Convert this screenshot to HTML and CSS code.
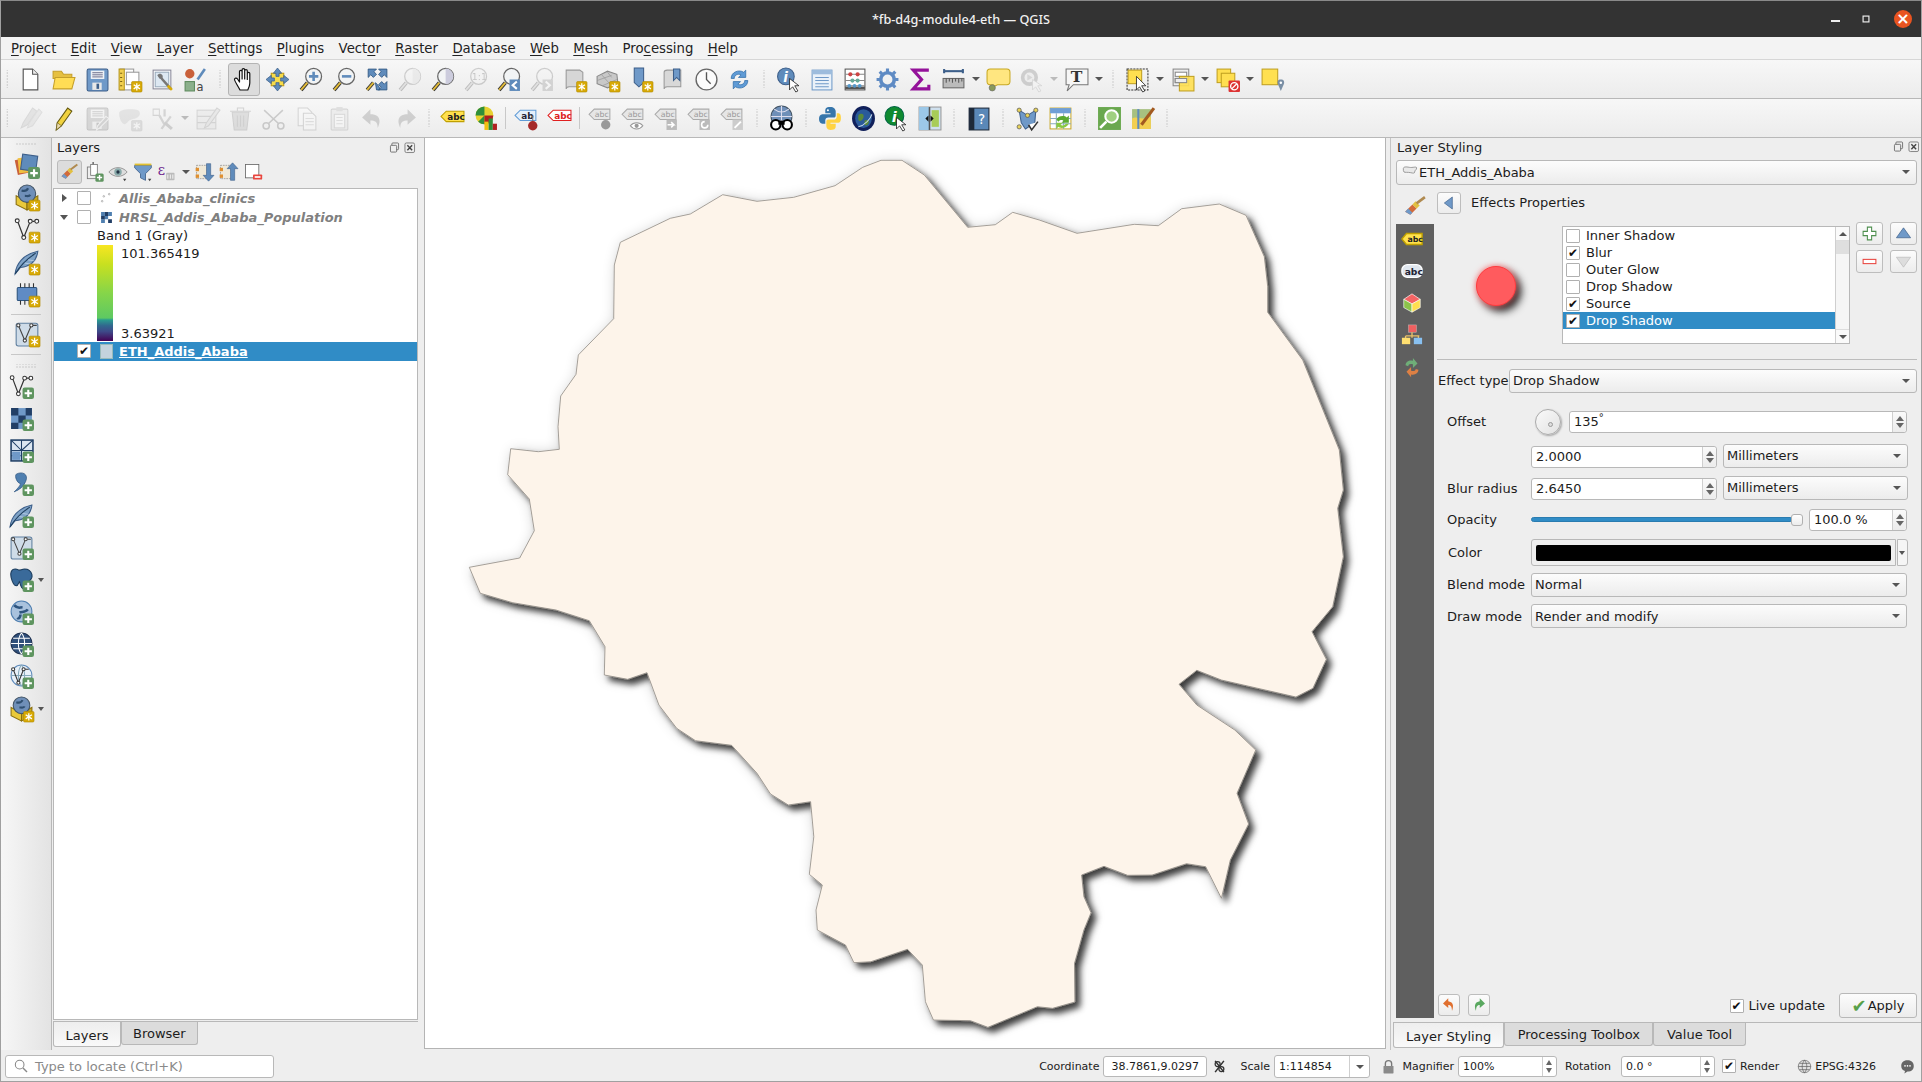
FILE: index.html
```html
<!DOCTYPE html>
<html lang="en">
<head>
<meta charset="utf-8">
<title>*fb-d4g-module4-eth — QGIS</title>
<link rel="stylesheet" href="styles.css">
</head>
<body>
<svg class="defs" width="0" height="0" aria-hidden="true">
<defs>
<g id="bs"><rect x="14" y="14" width="10" height="10" rx="1" fill="#d8aa06" stroke="#b08a00" stroke-width=".6"/><path d="M19 15.5v7M16 17l6 4M22 17l-6 4" stroke="#fff" stroke-width="1.2"/></g>
<g id="bp"><rect x="13" y="13" width="11" height="11" rx="2" fill="#5f9560"/><path d="M18.500 15v7M15 18.500h7" stroke="#fff" stroke-width="2"/></g>
<g id="new"><path d="M5 2h9l5 5v15H5z" fill="#fff" stroke="#555" stroke-width="1.100"/><path d="M14 2v5h5" fill="#eee" stroke="#555"/></g>
<g id="open"><path d="M2 7V4h8l2 3h8v4H2z" fill="#e6c040" stroke="#c59f2a"/><path d="M2 21l2-11h19l-3 11z" fill="#ffdd55" stroke="#c59f2a"/></g>
<g id="save"><rect x="3" y="2" width="20" height="21" rx="1.500" fill="#6f99c8" stroke="#3d5f8a"/><rect x="6.500" y="3.500" width="13" height="8" fill="#eef2f6"/><path d="M8 5.500h10M8 7.500h10M8 9.500h10" stroke="#557" stroke-width=".8"/><rect x="8" y="15" width="9" height="7" fill="#e8e8e8"/><rect x="12" y="16" width="2.500" height="5" fill="#3d5f8a"/></g>
<g id="layout"><rect x="3" y="2" width="13" height="20" fill="#fff" stroke="#999"/><rect x="2" y="2" width="5" height="20" fill="#f1cf50" stroke="#b6961e"/><rect x="9" y="5" width="12" height="12" fill="#fff" stroke="#999"/><path d="M3 6h2M3 10h2M3 14h2M3 18h2" stroke="#7a6210"/><use href="#bs"/></g>
<g id="props"><rect x="3" y="3" width="17" height="18" fill="#fff" stroke="#889"/><rect x="5" y="5" width="13" height="14" fill="#dde8f2" stroke="#9ab"/><path d="M9 8l3 4 8 9" stroke="#777" stroke-width="2.400" fill="none"/><path d="M17 18l4 4" stroke="#d8aa06" stroke-width="2.500"/><path d="M7 8c1-2 4-2 5 0s-1 4-3 3z" fill="#777"/></g>
<g id="style"><circle cx="6.500" cy="6.500" r="4.500" fill="#c9603a"/><path d="M14 12L21 2" stroke="#5f8bbb" stroke-width="2.500"/><rect x="2" y="14" width="9" height="9" fill="#8cb08c" stroke="#5d8a5d"/><text x="13" y="23" class="svgt" font-size="11" fill="#444">a</text></g>
<g id="hand"><path d="M8 23C6 19 3 15 2.500 12.500c0-1.500 2-2 3-.5L7.500 15V4.500c0-1.600 2.600-1.600 2.600 0V12 2.800c0-1.600 2.600-1.600 2.600 0V12 3.800c0-1.600 2.600-1.600 2.600 0V12.500 6.500c0-1.500 2.500-1.500 2.500 0V16c0 3-1 5-2 7z" fill="#fff" stroke="#111" stroke-width="1.200" stroke-linejoin="round"/></g>
<g id="pansel"><rect x="6" y="6" width="12" height="12" fill="#f7dc4a" stroke="#c09a10"/><path d="M12 1l4 5h-2.500v3h-3V6H8zM12 23l4-5h-2.500v-3h-3v3H8zM1 12l5-4v2.500h3v3H6V16zM23 12l-5-4v2.500h-3v3h3V16z" fill="#5f8bbb" stroke="#3d5f8a" stroke-width=".7"/></g>
<g id="mg"><path d="M9 15l-6 7" stroke="#333" stroke-width="3.600"/><path d="M9 15l-6 7" stroke="#e2bb3a" stroke-width="1.800"/><circle cx="15" cy="9" r="7.600" fill="#f2f4f5" stroke="#666" stroke-width="1.200"/></g>
<g id="zin"><use href="#mg"/><path d="M15 4.500v9M10.500 9h9" stroke="#5f8bbb" stroke-width="2.500"/></g>
<g id="zout"><use href="#mg"/><path d="M10.500 9h9" stroke="#5f8bbb" stroke-width="2.500"/></g>
<g id="zfull"><path d="M9 15l-6 7" stroke="#333" stroke-width="3.500"/><path d="M9 15l-6 7" stroke="#e2bb3a" stroke-width="1.800"/><path d="M4 2h8l-2.500 2.500L12 7l-3 3-2.500-2.500L4 10zM22 2v8l-2.500-2.500L17 10l-3-3 2.500-2.500L14 2zM22 22h-8l2.500-2.500L14 17l3-3 2.500 2.500L22 14zM11 15l2 2 2 3v2h-3z" fill="#5f8bbb" stroke="#2f5680" stroke-width=".8"/></g>
<g id="zsel"><use href="#mg"/><path d="M15 1.500a7.500 7.500 0 0 1 0 15z" fill="#e8d880"/></g>
<g id="zlay"><use href="#mg"/><path d="M15 1.500a7.500 7.500 0 0 1 0 15z" fill="#ccd"/></g>
<g id="z11"><use href="#mg"/><text x="8.500" y="12.500" class="svgt" font-size="9" fill="#555">1:1</text></g>
<g id="zlast"><use href="#mg"/><rect x="13" y="12" width="10" height="11" fill="#5f8bbb"/><path d="M20 14l-4 3.500 4 3.500" stroke="#fff" stroke-width="2" fill="none"/></g>
<g id="znext"><use href="#mg"/><rect x="13" y="12" width="10" height="11" fill="#888"/><path d="M16 14l4 3.500-4 3.500" stroke="#fff" stroke-width="2" fill="none"/></g>
<g id="mapv"><path d="M4 3h13l3 2v14H7c-2 0-3 1-3 2z" fill="#d6d6d6" stroke="#999"/><use href="#bs"/></g>
<g id="view3"><path d="M2 9l10-5 9 3 1 9-10 4-10-4z" fill="#c8c8c8" stroke="#888"/><path d="M6 7l8 9M12 5l4 5M2 13l14-5M7 18l14-6" stroke="#999" stroke-width=".7"/><use href="#bs"/></g>
<g id="bmk"><path d="M6 1h9v14l-4.500 4L6 15z" fill="#6f99c8" stroke="#3d5f8a"/><use href="#bs"/></g>
<g id="bmks"><path d="M3 5c0-2 2-2 3-2h13v16H6c-2 0-3 1-3 2z" fill="#d8d8d8" stroke="#999"/><path d="M12 2h6v11l-3-3-3 3z" fill="#6f99c8" stroke="#3d5f8a"/></g>
<g id="clock"><circle cx="12" cy="12" r="10" fill="#fbfbfb" stroke="#666" stroke-width="1.300"/><path d="M12 5v7l4 4" stroke="#555" stroke-width="1.300" fill="none"/></g>
<g id="refresh"><path d="M4 11c0-6 7-9 12-6l2-2v7h-7l2.500-2.500C10 6 7 8 7 11z" fill="#5f9bd6" stroke="#2f6ba6" stroke-width=".7"/><path d="M20 13c0 6-7 9-12 6l-2 2v-7h7l-2.500 2.500C14 18 17 16 17 13z" fill="#5f9bd6" stroke="#2f6ba6" stroke-width=".7"/></g>
<g id="identify"><circle cx="9.500" cy="9" r="8" fill="#5f8bbb" stroke="#3d5f8a"/><text x="7" y="14" class="svgt b i" font-size="13" fill="#fff">i</text><path d="M13 11v11l3-3 3 5 2-1-3-5h4z" fill="#fff" stroke="#222" stroke-width=".8"/></g>
<g id="table"><rect x="3" y="3" width="19" height="19" fill="#e9f1f9" stroke="#6f99c8"/><rect x="3" y="3" width="19" height="4" fill="#9dbcdd"/><path d="M6 10h13M6 13h13M6 16h13M6 19h13" stroke="#6f99c8"/></g>
<g id="abacus"><rect x="3" y="2" width="19" height="20" fill="#fff" stroke="#555"/><path d="M3 20h19" stroke="#555" stroke-width="2.500"/><path d="M3 7h19M3 13h19M3 18h19" stroke="#888"/><circle cx="8" cy="7" r="2" fill="#c44"/><circle cx="15" cy="7" r="2" fill="#c44"/><circle cx="10" cy="13" r="2" fill="#6a9"/><circle cx="15" cy="13" r="2" fill="#6a9"/><circle cx="7" cy="18" r="1.800" fill="#59c"/><circle cx="12" cy="18" r="1.800" fill="#59c"/><circle cx="17" cy="18" r="1.800" fill="#59c"/></g>
<g id="gear"><circle cx="12" cy="12" r="6.500" fill="none" stroke="#5f8bc4" stroke-width="3.500"/><path d="M12 1.500v5M12 17.500v5M1.500 12h5M17.500 12h5M4.500 4.500l3.500 3.500M16 16l3.500 3.500M19.500 4.500L16 8M8 16l-3.500 3.500" stroke="#5f8bc4" stroke-width="3"/></g>
<g id="sigma"><path d="M20 3H5l8 9-8 9h15v-4" fill="none" stroke="#94129a" stroke-width="3"/></g>
<g id="measure"><path d="M3 4h18" stroke="#3d5f8a" stroke-width="2"/><path d="M3 2v4M21 2v4" stroke="#3d5f8a" stroke-width="2"/><rect x="2" y="11" width="20" height="9" fill="#bbb" stroke="#666"/><path d="M5 11v4M8 11v3M11 11v4M14 11v3M17 11v4M20 11v3" stroke="#555"/></g>
<g id="tip"><path d="M4 2h16c2 0 3 1 3 3v9c0 2-1 3-3 3H11l-4 2V17H4c-2 0-3-1-3-3V5c0-2 1-3 3-3z" fill="#ffe680" stroke="#c8a820"/><circle cx="6" cy="20" r="3" fill="#8a9a5a" stroke="#666" stroke-width=".6"/></g>
<g id="action"><circle cx="10" cy="10" r="6.500" fill="#e9e9e9" stroke="#aaa" stroke-width="3.500"/><path d="M8 7l5 3-5 3z" fill="#bbb"/><path d="M13 12v10l3-3 3 5 2-1-3-5h4z" fill="#f4f4f4" stroke="#bbb" stroke-width=".8"/></g>
<g id="ttext"><path d="M2 2h21v15H9l-6 6 2-6H2z" fill="#f6f6f6" stroke="#777"/><text x="6.500" y="14.500" class="svgs" font-size="15" font-weight="700" fill="#333">T</text></g>
<g id="select"><rect x="2" y="2" width="20" height="20" fill="none" stroke="#333" stroke-dasharray="2 1"/><rect x="3" y="3" width="13" height="13" fill="#ffdf50" stroke="#c0a020"/><path d="M11 9v13l3-3 3 5 2-1-3-5h4z" fill="#fff" stroke="#222" stroke-width=".8"/></g>
<g id="selform"><rect x="3" y="2" width="15" height="16" fill="#eee" stroke="#888"/><rect x="5" y="5" width="11" height="4" fill="#fff" stroke="#888"/><rect x="5" y="11" width="11" height="4" fill="#fff" stroke="#888"/><rect x="9" y="9" width="14" height="14" fill="#ffdf50" stroke="#c0a020" fill-opacity=".9"/><rect x="5" y="11" width="11" height="4" fill="#eee" stroke="#888"/></g>
<g id="desel"><rect x="2" y="2" width="13" height="13" fill="#ffdf50" stroke="#c0a020"/><rect x="6" y="6" width="13" height="13" fill="#ffdf50" stroke="#c0a020"/><rect x="13" y="13" width="11" height="11" rx="1" fill="#d33"/><circle cx="18.500" cy="18.500" r="3.500" fill="none" stroke="#fff" stroke-width="1.300"/><path d="M16 21l5-5" stroke="#fff" stroke-width="1.300"/></g>
<g id="selpin"><rect x="2" y="2" width="15" height="15" fill="#ffe050" stroke="#c0a020"/><path d="M20 12c-3 0-3.500 2-3 4l3 7 3-7c.5-2 0-4-3-4z" fill="#7a8fa5"/><circle cx="20" cy="15" r="1.200" fill="#fff"/></g>
<g id="pencils"><path d="M3 21l2-5L14 2l4 3-9 13z" fill="#bbb" stroke="#999"/><path d="M9 21l2-5 9-13 3 3-9 13z" fill="#ccc" stroke="#aaa"/></g>
<g id="pencil"><path d="M5 23l1-7L16 2l4 3-10 14z" fill="#f1d23f" stroke="#665a10"/><path d="M5 23l1-7 4 3z" fill="#e9d9b0" stroke="#665a10" stroke-width=".6"/></g>
<g id="savee"><use href="#save"/><path d="M12 23l1-4 8-9 3 2-9 9z" fill="#888" stroke="#eee"/></g>
<g id="addpoly"><path d="M2 7c0-3 5-4 10-4s10 0 10 4-4 5-8 6-5 6-8 4-4-7-4-10z" fill="#bbb"/><use href="#bs"/></g>
<g id="tools"><path d="M3 3h6v6H3z" fill="none" stroke="#888"/><path d="M9 9l5 9M14 3v7M20 10l-9 12" stroke="#888" stroke-width="2.200"/><path d="M14 16l7 6" stroke="#777" stroke-width="3"/></g>
<g id="edittab"><rect x="2" y="4" width="18" height="18" fill="#ddd" stroke="#888"/><path d="M2 10h18M2 16h18" stroke="#888" stroke-width="1.300"/><path d="M9 21l2-5 10-14 3 2-11 15z" fill="#ccc" stroke="#888"/></g>
<g id="trash"><path d="M4 6h16l-2 17H6z" fill="#b8a8a0" stroke="#8a7a70"/><path d="M2 5h20M9 2h6v3H9zM9 9v11M12 9v11M15 9v11" stroke="#8a7a70" fill="none"/></g>
<g id="scissors"><circle cx="5" cy="19" r="3" fill="none" stroke="#666" stroke-width="1.500"/><circle cx="19" cy="19" r="3" fill="none" stroke="#666" stroke-width="1.500"/><path d="M7 17L21 4M17 17L3 4" stroke="#666" stroke-width="1.500"/></g>
<g id="copy"><path d="M4 2h9l4 4v13H4z" fill="#fff" stroke="#888"/><path d="M9 7h9l3 3v13H9z" fill="#fff" stroke="#888"/><path d="M11 12h8M11 15h8M11 18h8" stroke="#aaa"/></g>
<g id="paste"><rect x="4" y="3" width="16" height="20" rx="1" fill="#ddd" stroke="#888"/><rect x="9" y="1" width="6" height="4" fill="#aaa"/><rect x="7" y="8" width="10" height="13" fill="#fff" stroke="#999"/><path d="M9 11h6M9 14h6M9 17h6" stroke="#aaa"/></g>
<g id="undo"><path d="M10 3L2 11l8 7v-4c4 0 7 1 7 7 4-8 1-13-7-13z" fill="#777"/></g>
<g id="redo"><path d="M14 3l8 8-8 7v-4c-4 0-7 1-7 7-4-8-1-13 7-13z" fill="#777"/></g>
<g id="lab"><path d="M1 10l5-5h17v10H6z" fill="#ffe14d" stroke="#c0a000"/><text x="7" y="13.500" class="svgt b" font-size="8.500" fill="#222">abc</text></g>
<g id="pie"><circle cx="11" cy="9" r="8.500" fill="#e7d130"/><path d="M11 9V.5A8.500 8.500 0 0 0 2.500 9z" fill="#2f8f3a"/><path d="M11 9L5 15a8.500 8.500 0 0 0 6 2.500z" fill="#2f8f3a"/><path d="M11 9h8.500a8.500 8.500 0 0 1-8.500 8.500z" fill="#b02020"/><rect x="11" y="15" width="4" height="8" fill="#f0c010"/><rect x="15" y="12" width="4" height="11" fill="#2f8f3a"/><rect x="19" y="17" width="4" height="6" fill="#b02020"/></g>
<g id="labpin"><path d="M1 9l5-5h15v10H6z" fill="#e4effa" stroke="#5f9bd6"/><text x="7" y="12.500" class="svgt b" font-size="8.500" fill="#223">ab</text><path d="M18 9v7" stroke="#777"/><circle cx="18" cy="19" r="4.500" fill="#a52a2a"/></g>
<g id="labred"><path d="M1 9l5-5h17v10H6z" fill="#fff" stroke="#e02020"/><text x="7" y="12.500" class="svgt b" font-size="8.500" fill="#d22">abc</text></g>
<g id="labg"><path d="M1 8l5-5h15v10H6z" fill="#e6e6e6" stroke="#aaa"/><text x="6.500" y="11" class="svgt" font-size="7.500" fill="#999">abc</text></g>
<g id="labg1"><use href="#labg"/><circle cx="17" cy="18" r="4.500" fill="#999"/></g>
<g id="labg2"><use href="#labg"/><path d="M9 19c3-4 9-4 12 0-3 4-9 4-12 0z" fill="#fff" stroke="#999"/><circle cx="15" cy="19" r="2" fill="#999"/></g>
<g id="labg3"><use href="#labg"/><rect x="12" y="13" width="10" height="10" fill="#bbb"/><path d="M13 18h6l-2.500-2.500M19 18l-2.500 2.500" stroke="#fff" stroke-width="1.500" fill="none"/></g>
<g id="labg4"><use href="#labg"/><rect x="12" y="13" width="10" height="10" fill="#bbb"/><path d="M20 18a3 3 0 1 1-3-3" stroke="#fff" stroke-width="1.500" fill="none"/></g>
<g id="labg5"><use href="#labg"/><rect x="12" y="13" width="10" height="10" fill="#ccc"/><path d="M14 21l6-6" stroke="#fff" stroke-width="2"/></g>
<g id="webglobe"><circle cx="12" cy="10" r="10" fill="#6f8fb8" stroke="#456"/><path d="M2 10h20M12 0v20M5 3c5 4 9 4 14 0M5 17c5-4 9-4 14 0" stroke="#dde" fill="none"/><circle cx="6.500" cy="18" r="4.500" fill="#fff" stroke="#000" stroke-width="2"/><circle cx="17.500" cy="18" r="4.500" fill="#fff" stroke="#000" stroke-width="2"/><path d="M9 14h6v4H9z" fill="#000"/></g>
<g id="python"><path d="M12 1C7 1 7 3 7 5v2h5v1H5c-2 0-4 1-4 4.500S3 17 5 17h2v-3c0-2 1-3 3-3h5c1.500 0 2-1 2-2V5c0-2-2-4-5-4z" fill="#3776ab"/><path d="M12 23c5 0 5-2 5-4v-2h-5v-1h7c2 0 3-1 3-4.500S21 7 19 7h-1v3c0 2-1 3-3 3H10c-1.500 0-2 1-2 2v4c0 2 1 4 4 4z" fill="#ffd343"/><circle cx="9.500" cy="4" r="1" fill="#fff"/></g>
<g id="earth"><ellipse cx="12" cy="12" rx="11" ry="12" fill="#10205a"/><ellipse cx="12" cy="12" rx="8" ry="9" fill="#2a5a9a"/><path d="M7 9c3-3 6-1 5 2s-4 5-5 2zM13 14c2-1 5-1 4 2s-3 3-4 2z" fill="#5a8a3a"/><path d="M7 20c6-1 12-8 13-12" stroke="#cde" fill="none"/></g>
<g id="infog"><circle cx="10" cy="9.500" r="9" fill="#108a30" stroke="#064"/><text x="7.500" y="15" class="svgt b i" font-size="14" fill="#fff">i</text><path d="M12 11v11l3-3 3 5 2-1-3-5h4z" fill="#fff" stroke="#222" stroke-width=".8"/></g>
<g id="swipe"><rect x="2" y="1" width="21" height="22" fill="#cfe0ee" stroke="#999"/><rect x="2" y="1" width="10" height="22" fill="#9cc8e8"/><rect x="14" y="4" width="7" height="16" fill="#a8cc58"/><path d="M12 1v22" stroke="#555" stroke-width="1.500"/><path d="M8 12l3-3v6zM16 12l-3-3v6z" fill="#111"/></g>
<g id="help"><rect x="3" y="2" width="19" height="21" fill="#5a88b8" stroke="#1e2a3a"/><rect x="3" y="2" width="5" height="21" fill="#1e2a3a"/><text x="11.500" y="17" class="svgt" font-size="13" fill="#fff">?</text></g>
<g id="nodes"><path d="M4 4l8 5 8-5-1 12-9 6-4-6z" fill="#6f99c8" stroke="#3d5f8a"/><g fill="#e8d35a" stroke="#555" stroke-width=".7"><circle cx="4" cy="4" r="2"/><circle cx="20" cy="4" r="2"/><circle cx="4" cy="20" r="2"/><circle cx="12" cy="9" r="2"/></g><path d="M13 18l3 5 6-8" stroke="#333" stroke-width="1.500" fill="#fff"/></g>
<g id="tabref"><rect x="2" y="2" width="20" height="20" fill="#fff" stroke="#c9a82a"/><rect x="2" y="2" width="20" height="5" fill="#6f9fd6"/><path d="M2 12h20M2 17h20M8 7v15M15 7v15" stroke="#8ab"/><path d="M8 13c2-4 8-4 10-2l2-2v7h-7l2-2c-1-1-4-1-5 1z" fill="#5aaa30"/><path d="M20 17c-2 4-8 5-10 3l-2 2v-6h6l-2 2c1 1 4 1 5-1z" fill="#8ac840"/></g>
<g id="greenmg"><rect x="1" y="1" width="22" height="22" fill="#6aa84f"/><circle cx="14" cy="10" r="6" fill="#a0d080" stroke="#fff" stroke-width="2"/><path d="M9 15l-6 6" stroke="#fff" stroke-width="2.500"/></g>
<g id="mapbrush"><rect x="2" y="3" width="18" height="19" fill="#a7c080"/><path d="M2 12c5-3 9 3 18-2v12H2z" fill="#f3cf50"/><path d="M8 3v19" stroke="#5f8bbb" stroke-width="2"/><path d="M11 18L23 2" stroke="#a35a20" stroke-width="3"/></g>
<g id="brushb"><path d="M3 17l7-7 4 4-6 6z" fill="#d26a3a"/><path d="M3 17l3-3 4 4-2 2z" fill="#6f99c8"/><path d="M10 10l4 4 3-3-4-4z" fill="#e2c040"/><path d="M14 9l8-6" stroke="#b08a50" stroke-width="2.500"/></g>
<g id="duplayer"><rect x="4" y="6" width="11" height="14" fill="#eee" stroke="#777"/><rect x="8" y="3" width="8" height="13" fill="#fff" stroke="#777"/><path d="M11 3V0" stroke="#777" stroke-width="2"/><use href="#bp" transform="translate(2 2) scale(.9)"/></g>
<g id="eye"><path d="M1 12c6-7 16-7 22 0-6 7-16 7-22 0z" fill="#ddd" stroke="#888"/><circle cx="12" cy="12" r="4.500" fill="#8aa"/><circle cx="12" cy="12" r="2" fill="#234"/><path d="M18 20l4 0-2 3z" fill="#444"/></g>
<g id="filter"><path d="M2 4h20v3l-7 7v8l-6-3v-5L2 7z" fill="#6f99c8" stroke="#3d5f8a"/><path d="M2 3h20" stroke="#e2c030" stroke-width="2.200"/><path d="M18 20l4 0-2 3z" fill="#444"/></g>
<g id="eps"><text x="1" y="15" class="svgs" font-size="17" fill="#6a1a8a">ε</text><rect x="11" y="13" width="10" height="9" rx="1" fill="#bbb"/><path d="M13 15v5M16 15v5M19 15v5" stroke="#fff"/></g>
<g id="expand"><rect x="3" y="4" width="13" height="16" fill="#f0e9d8" stroke="#999" stroke-dasharray="2 1"/><rect x="2" y="7" width="4" height="4" fill="#e09030"/><rect x="2" y="15" width="4" height="4" fill="#e09030"/><path d="M15 2v14h-4l6.500 7 6.500-7h-4V2z" fill="#5f8bbb" stroke="#3d5f8a" stroke-width=".7"/></g>
<g id="collapse"><rect x="3" y="4" width="13" height="16" fill="#f0e9d8" stroke="#999" stroke-dasharray="2 1"/><rect x="2" y="7" width="4" height="4" fill="#e09030"/><rect x="2" y="15" width="4" height="4" fill="#e09030"/><path d="M15 22V8h-4l6.500-7L24 8h-4v14z" fill="#5f8bbb" stroke="#3d5f8a" stroke-width=".7"/></g>
<g id="rmlayer"><rect x="3" y="3" width="16" height="16" fill="#fff" stroke="#666"/><rect x="12" y="15" width="11" height="6" rx="1" fill="#e8463f"/><path d="M14 18h7" stroke="#fff" stroke-width="2"/></g>
<g id="dsm"><rect x="2" y="5" width="14" height="14" transform="rotate(-12 9 12)" fill="#c9603a"/><rect x="4" y="4" width="14" height="14" transform="rotate(-6 11 11)" fill="#f0c040"/><rect x="7" y="2" width="14" height="14" transform="rotate(8 14 9)" fill="#5f8bbb" stroke="#3d5f8a"/><use href="#bp"/></g>
<g id="gpkgn"><path d="M2 10l10 5v8l-10-5z" fill="#e9c93a" stroke="#8a7010"/><path d="M12 15l10-5v8l-10 5z" fill="#c9a820" stroke="#8a7010"/><circle cx="12" cy="8" r="8" fill="#6f8fb8" stroke="#456"/><path d="M7 5c3 1 5 0 6-2M10 10c2 0 4 1 5-1" stroke="#2f4f70" stroke-width="2" fill="none"/><use href="#bs"/></g>
<g id="vline"><path d="M3 3l6 16L15 4h6" fill="none" stroke="#333" stroke-width="1.100"/><g fill="#fff" stroke="#333"><circle cx="3" cy="3.500" r="1.800"/><circle cx="9" cy="19" r="1.800"/><circle cx="15" cy="4" r="1.800"/><circle cx="21" cy="4" r="1.800"/></g></g>
<g id="feather"><path d="M1 23C2 14 8 5 22 2c-1 8-6 14-16 15z" fill="#7fa3c7" stroke="#3d5f8a"/><path d="M1 23C6 15 12 9 20 4" stroke="#1f3f5f" fill="none"/><path d="M10 13l6 1M13 10l6 1" stroke="#cde" stroke-width=".6"/></g>
<g id="chip"><rect x="3" y="6" width="18" height="12" rx="1" fill="#5f8bc4" stroke="#2f5680"/><path d="M6 2v4M10 2v4M14 2v4M18 2v4M6 18v4M10 18v4M14 18v4" stroke="#333"/></g>
<g id="vbox"><rect x="2" y="2" width="20" height="21" rx="2" fill="#cfdce8" stroke="#5f7f9f"/><path d="M4 4l6 14 6-14h5" fill="none" stroke="#444"/><circle cx="4" cy="4" r="1.500" fill="#fff" stroke="#444"/><circle cx="10" cy="18" r="1.500" fill="#fff" stroke="#444"/><circle cx="16" cy="4" r="1.500" fill="#fff" stroke="#444"/></g>
<g id="rast"><rect x="2" y="2" width="20" height="20" fill="#6f99c8"/><path d="M2 2h7v7H2zM9 9h7v7H9zM16 2h6v7h-6zM2 16h7v6H2zM16 16h6v6h-6z" fill="#223f66"/></g>
<g id="mesh"><rect x="2" y="2" width="21" height="20" fill="#dbe6f1" stroke="#1f3f66" stroke-width="1.500"/><path d="M2 12h21M12 2v20M2 2l10 10M12 12L23 2M2 17h10" stroke="#1f3f66"/><rect x="3" y="13" width="8" height="8" fill="#6f99c8"/></g>
<g id="comma"><path d="M7 3c6-3 12 0 9 7-2 5-6 8-11 10 3-3 6-6 6-8-3 0-6-7-4-9z" fill="#4f7fb0" stroke="#2f5680" stroke-width=".7"/></g>
<g id="pg"><path d="M6 2c-4 0-5 4-4 8s3 8 5 8 2-3 3-4c1 2 1 6 4 7s4-3 4-7c2 0 5-4 4-7s-3-5-7-5c-3 0-3 1-5 1S9 2 6 2z" fill="#3a6a9a" stroke="#1c3c5c"/></g>
<g id="webmap"><circle cx="12" cy="11" r="10" fill="#a9c2dd" stroke="#4f7fb0"/><path d="M5 5c4 4 5 2 8 2M10 12c3-1 6 0 8-3M8 17c2 2 3-2 3-3" stroke="#2f5680" stroke-width="2.500" fill="none"/></g>
<g id="wms"><circle cx="12" cy="11" r="10" fill="#2f4f7a" stroke="#1c2f4f"/><path d="M2 11h20M4 6h16M4 16h16M12 1c-4 5-4 15 0 20M12 1c4 5 4 15 0 20" stroke="#fff" fill="none"/></g>
<g id="wfs"><circle cx="12" cy="11" r="10" fill="#e9f1f9" stroke="#5f8bbb"/><path d="M2 11h20M12 1c-4 5-4 15 0 20M12 1c4 5 4 15 0 20" stroke="#8ab" fill="none"/><path d="M4 5l5 13 5-13h5" fill="none" stroke="#333"/><circle cx="4" cy="5" r="1.500" fill="#fff" stroke="#333"/><circle cx="9" cy="18" r="1.500" fill="#fff" stroke="#333"/><circle cx="14" cy="5" r="1.500" fill="#fff" stroke="#333"/></g>
<g id="gpkg"><path d="M2 10l10 5v8L2 18z" fill="#e9c93a" stroke="#8a7010"/><path d="M12 15l10-5v8l-10 5z" fill="#c9a820" stroke="#8a7010"/><circle cx="12" cy="8" r="8" fill="#6f8fb8" stroke="#456"/><path d="M7 5c3 1 5 0 6-2M10 10c2 0 4 1 5-1" stroke="#2f4f70" stroke-width="2" fill="none"/></g>
<g id="labw"><path d="M1 12l5-6h17v12H6z" fill="#ffe14d" stroke="#c0a000" stroke-width="1.500"/><text x="7" y="15.500" class="svgt b" font-size="8.500" fill="#222">abc</text></g>
<g id="labc"><rect x="1" y="5" width="22" height="14" rx="6" fill="#dfe6ee" stroke="#fff" stroke-width="1.500"/><text x="4" y="16" class="svgt b" font-size="10" fill="#223">abc</text></g>
<g id="cube"><path d="M12 2l9 6-9 5-9-5z" fill="#f46464" stroke="#fff" stroke-width=".7"/><path d="M3 8l9 5v9l-9-5z" fill="#8bc34a" stroke="#fff" stroke-width=".7"/><path d="M21 8l-9 5v9l9-5z" fill="#ffdf50" stroke="#fff" stroke-width=".7"/></g>
<g id="tree"><rect x="8" y="1" width="9" height="8" fill="#ef6060" stroke="#bbb" stroke-width=".5"/><path d="M12 9v6M5 13h15M5 13v3M19 13v3" stroke="#e8c068" stroke-width="1.500" fill="none"/><rect x="1" y="15" width="9" height="7" fill="#ffdf70"/><rect x="14" y="15" width="9" height="7" fill="#88c0f0"/></g>
<g id="history"><path d="M5 9c0-4 4-6 8-5V1l5 6-5 5V8c-3-1-5 0-5 2z" fill="#6fae78"/><path d="M19 14c0 4-4 6-8 5v3l-5-6 5-5v4c3 1 5 0 5-2z" fill="#dd8044"/></g>
<g id="undoo"><path d="M11 3L4 10l7 6v-4c3 0 5 2 5 8 3-8 1-12-5-13z" fill="#e07030"/></g>
<g id="redog"><path d="M13 3l7 7-7 6v-4c-3 0-5 2-5 8-3-8-1-12 5-13z" fill="#5aa860"/></g>
<g id="plusg"><path d="M9 3h6v6h6v6h-6v6H9v-6H3V9h6z" fill="#fff" stroke="#4f8f4f" stroke-width="1.500"/></g>
<g id="minusr"><rect x="3" y="9" width="18" height="6" fill="#fff" stroke="#e8463f" stroke-width="1.500"/></g>
<g id="upb"><path d="M12 4l10 14H2z" fill="#6f99c8" stroke="#3d5f8a"/></g>
<g id="dng"><path d="M12 20L2 6h20z" fill="#ddd" stroke="#bbb"/></g>
<g id="backb"><path d="M17 3v18L5 12z" fill="#6f99c8" stroke="#3d5f8a"/></g>
<g id="points"><circle cx="4" cy="17" r="1.500" fill="#fff" stroke="#666" stroke-width=".8"/><circle cx="7" cy="8" r="1.500" fill="#fff" stroke="#666" stroke-width=".8"/><circle cx="17" cy="4" r="1.500" fill="#fff" stroke="#666" stroke-width=".8"/></g>
<g id="rastsm"><rect x="2" y="2" width="20" height="20" fill="#fff"/><path d="M2 2h7v7H2zM15 2h7v7h-7zM9 9h6v6H9zM2 15h7v7H2z" fill="#4f7fb0"/><path d="M9 2h6v7H9zM2 9h7v6H2zM15 15h7v7h-7z" fill="#223f66"/></g>
<g id="polysm"><path d="M2 7c0-3 4-3 9-2s11-2 11 1-3 3-3 6c0 2-2 2-6 1s-9 0-10-1-1-3-1-5z" fill="#e9e9e9" stroke="#888" stroke-width="1.200"/></g>
<g id="float"><rect x="6" y="2" width="14" height="14" rx="2" fill="none" stroke="#555" stroke-width="1.600"/><rect x="3" y="7" width="13" height="14" rx="2" fill="#eee" stroke="#555" stroke-width="1.600"/></g>
<g id="closep"><rect x="2" y="2" width="20" height="20" rx="3" fill="none" stroke="#666" stroke-width="1.600"/><path d="M7 7l10 10M17 7L7 17" stroke="#444" stroke-width="3"/></g>
<g id="search"><circle cx="10" cy="10" r="6.500" fill="none" stroke="#888" stroke-width="1.600"/><path d="M15 15l6 6" stroke="#888" stroke-width="2"/></g>
<g id="crosshair"><path d="M5 3l14 18M19 3L5 21" stroke="#333" stroke-width="2.500"/><circle cx="9" cy="8" r="4" fill="none" stroke="#333" stroke-width="2"/><circle cx="15" cy="16" r="4" fill="none" stroke="#333" stroke-width="2"/></g>
<g id="lock"><path d="M7 11V7c0-6 10-6 10 0v4" fill="none" stroke="#777" stroke-width="2.200"/><rect x="4" y="11" width="16" height="12" rx="1" fill="#8a8a8a"/></g>
<g id="globes"><circle cx="12" cy="12" r="10" fill="#e0e0e0" stroke="#555"/><path d="M2 12h20M4 7h16M4 17h16M12 2c-5 6-5 14 0 20M12 2c5 6 5 14 0 20" stroke="#555" fill="none"/></g>
<g id="msg"><path d="M12 2c7 0 10 4 10 9s-3 9-10 9l-5 3 1-4c-4-1-6-4-6-8 0-5 3-9 10-9z" fill="#666"/><circle cx="8" cy="11" r="1.300" fill="#fff"/><circle cx="12" cy="11" r="1.300" fill="#fff"/><circle cx="16" cy="11" r="1.300" fill="#fff"/></g>
<g id="wrestore"><rect x="7" y="7" width="10" height="10" fill="none" stroke="#eee" stroke-width="2"/></g>
<filter id="dropshadow" x="-5%" y="-5%" width="112%" height="112%">
<feGaussianBlur in="SourceAlpha" stdDeviation="3.400" result="b"/>
<feOffset in="b" dx="5" dy="5" result="o"/>
<feComponentTransfer in="o" result="o2"><feFuncA type="linear" slope=".72"/></feComponentTransfer>
<feGaussianBlur in="SourceAlpha" stdDeviation="7" result="b2"/>
<feOffset in="b2" dx="2" dy="2" result="o3"/>
<feComponentTransfer in="o3" result="o4"><feFuncA type="linear" slope=".2"/></feComponentTransfer>
<feMerge><feMergeNode in="o4"/><feMergeNode in="o2"/><feMergeNode in="SourceGraphic"/></feMerge>
</filter>
</defs>
</svg>

<div class="win">
<header class="titlebar">
<span></span>
<span class="wintitle">*fb-d4g-module4-eth — QGIS</span>
<div class="winctl">
<span class="wmin"></span>
<svg class="wicon" viewBox="0 0 24 24"><use href="#wrestore"/></svg>
<span class="wclose">×</span>
</div>
</header>

<nav class="menubar">
<span><u>P</u>roject</span><span><u>E</u>dit</span><span><u>V</u>iew</span><span><u>L</u>ayer</span><span><u>S</u>ettings</span><span><u>P</u>lugins</span><span>Vect<u>o</u>r</span><span><u>R</u>aster</span><span><u>D</u>atabase</span><span><u>W</u>eb</span><span><u>M</u>esh</span><span>Pro<u>c</u>essing</span><span><u>H</u>elp</span>
</nav>

<div class="toolbar">
<i class="handle"></i>
<b class="tb"><svg viewBox="0 0 24 24"><use href="#new"/></svg></b>
<b class="tb"><svg viewBox="0 0 24 24"><use href="#open"/></svg></b>
<b class="tb"><svg viewBox="0 0 24 24"><use href="#save"/></svg></b>
<b class="tb"><svg viewBox="0 0 24 24"><use href="#layout"/></svg></b>
<b class="tb"><svg viewBox="0 0 24 24"><use href="#props"/></svg></b>
<b class="tb"><svg viewBox="0 0 24 24"><use href="#style"/></svg></b>
<i class="handle"></i>
<b class="tb on"><svg viewBox="0 0 24 24"><use href="#hand"/></svg></b>
<b class="tb"><svg viewBox="0 0 24 24"><use href="#pansel"/></svg></b>
<b class="tb"><svg viewBox="0 0 24 24"><use href="#zin"/></svg></b>
<b class="tb"><svg viewBox="0 0 24 24"><use href="#zout"/></svg></b>
<b class="tb"><svg viewBox="0 0 24 24"><use href="#zfull"/></svg></b>
<b class="tb dis"><svg viewBox="0 0 24 24"><use href="#zsel"/></svg></b>
<b class="tb"><svg viewBox="0 0 24 24"><use href="#zlay"/></svg></b>
<b class="tb dis"><svg viewBox="0 0 24 24"><use href="#z11"/></svg></b>
<b class="tb"><svg viewBox="0 0 24 24"><use href="#zlast"/></svg></b>
<b class="tb dis"><svg viewBox="0 0 24 24"><use href="#znext"/></svg></b>
<b class="tb"><svg viewBox="0 0 24 24"><use href="#mapv"/></svg></b>
<b class="tb"><svg viewBox="0 0 24 24"><use href="#view3"/></svg></b>
<b class="tb"><svg viewBox="0 0 24 24"><use href="#bmk"/></svg></b>
<b class="tb"><svg viewBox="0 0 24 24"><use href="#bmks"/></svg></b>
<b class="tb"><svg viewBox="0 0 24 24"><use href="#clock"/></svg></b>
<b class="tb"><svg viewBox="0 0 24 24"><use href="#refresh"/></svg></b>
<i class="handle"></i>
<b class="tb"><svg viewBox="0 0 24 24"><use href="#identify"/></svg></b>
<b class="tb"><svg viewBox="0 0 24 24"><use href="#table"/></svg></b>
<b class="tb"><svg viewBox="0 0 24 24"><use href="#abacus"/></svg></b>
<b class="tb"><svg viewBox="0 0 24 24"><use href="#gear"/></svg></b>
<b class="tb"><svg viewBox="0 0 24 24"><use href="#sigma"/></svg></b>
<b class="tb"><svg viewBox="0 0 24 24"><use href="#measure"/></svg></b><em class="drop"></em>
<b class="tb"><svg viewBox="0 0 24 24"><use href="#tip"/></svg></b>
<b class="tb dis2"><svg viewBox="0 0 24 24"><use href="#action"/></svg></b><em class="drop lite"></em>
<b class="tb"><svg viewBox="0 0 24 24"><use href="#ttext"/></svg></b><em class="drop"></em>
<i class="handle"></i>
<b class="tb"><svg viewBox="0 0 24 24"><use href="#select"/></svg></b><em class="drop"></em>
<b class="tb"><svg viewBox="0 0 24 24"><use href="#selform"/></svg></b><em class="drop"></em>
<b class="tb"><svg viewBox="0 0 24 24"><use href="#desel"/></svg></b><em class="drop"></em>
<b class="tb"><svg viewBox="0 0 24 24"><use href="#selpin"/></svg></b>
</div>

<div class="toolbar">
<i class="handle"></i>
<b class="tb dis"><svg viewBox="0 0 24 24"><use href="#pencils"/></svg></b>
<b class="tb"><svg viewBox="0 0 24 24"><use href="#pencil"/></svg></b>
<b class="tb dis"><svg viewBox="0 0 24 24"><use href="#savee"/></svg></b>
<b class="tb dis"><svg viewBox="0 0 24 24"><use href="#addpoly"/></svg></b>
<b class="tb dis"><svg viewBox="0 0 24 24"><use href="#tools"/></svg></b><em class="drop lite"></em>
<b class="tb dis"><svg viewBox="0 0 24 24"><use href="#edittab"/></svg></b>
<b class="tb dis"><svg viewBox="0 0 24 24"><use href="#trash"/></svg></b>
<b class="tb dis"><svg viewBox="0 0 24 24"><use href="#scissors"/></svg></b>
<b class="tb dis"><svg viewBox="0 0 24 24"><use href="#copy"/></svg></b>
<b class="tb dis"><svg viewBox="0 0 24 24"><use href="#paste"/></svg></b>
<b class="tb dis"><svg viewBox="0 0 24 24"><use href="#undo"/></svg></b>
<b class="tb dis"><svg viewBox="0 0 24 24"><use href="#redo"/></svg></b>
<i class="handle tight"></i>
<b class="tb"><svg viewBox="0 0 24 24"><use href="#lab"/></svg></b>
<b class="tb"><svg viewBox="0 0 24 24"><use href="#pie"/></svg></b>
<i class="vsep"></i>
<b class="tb"><svg viewBox="0 0 24 24"><use href="#labpin"/></svg></b>
<b class="tb"><svg viewBox="0 0 24 24"><use href="#labred"/></svg></b>
<i class="vsep"></i>
<b class="tb"><svg viewBox="0 0 24 24"><use href="#labg1"/></svg></b>
<b class="tb"><svg viewBox="0 0 24 24"><use href="#labg2"/></svg></b>
<b class="tb"><svg viewBox="0 0 24 24"><use href="#labg3"/></svg></b>
<b class="tb"><svg viewBox="0 0 24 24"><use href="#labg4"/></svg></b>
<b class="tb"><svg viewBox="0 0 24 24"><use href="#labg5"/></svg></b>
<i class="handle"></i>
<b class="tb"><svg viewBox="0 0 24 24"><use href="#webglobe"/></svg></b>
<i class="handle"></i>
<b class="tb"><svg viewBox="0 0 24 24"><use href="#python"/></svg></b>
<b class="tb"><svg viewBox="0 0 24 24"><use href="#earth"/></svg></b>
<b class="tb"><svg viewBox="0 0 24 24"><use href="#infog"/></svg></b>
<b class="tb"><svg viewBox="0 0 24 24"><use href="#swipe"/></svg></b>
<i class="handle"></i>
<b class="tb"><svg viewBox="0 0 24 24"><use href="#help"/></svg></b>
<i class="handle"></i>
<b class="tb"><svg viewBox="0 0 24 24"><use href="#nodes"/></svg></b>
<b class="tb"><svg viewBox="0 0 24 24"><use href="#tabref"/></svg></b>
<i class="handle"></i>
<b class="tb"><svg viewBox="0 0 24 24"><use href="#greenmg"/></svg></b>
<b class="tb"><svg viewBox="0 0 24 24"><use href="#mapbrush"/></svg></b>
<i class="handle"></i>
</div>

<main class="main">
<aside class="lefttb">
<i class="hhandle"></i>
<b class="lt"><svg viewBox="0 0 24 24"><use href="#dsm"/></svg></b>
<b class="lt"><svg viewBox="0 0 24 24"><use href="#gpkgn"/></svg></b>
<b class="lt"><svg viewBox="0 0 24 24"><use href="#vline"/><use href="#bs"/></svg></b>
<b class="lt"><svg viewBox="0 0 24 24"><use href="#feather"/><use href="#bs"/></svg></b>
<b class="lt"><svg viewBox="0 0 24 24"><use href="#chip"/><use href="#bs"/></svg></b>
<i class="hsep"></i>
<b class="lt"><svg viewBox="0 0 24 24"><use href="#vbox"/><use href="#bs"/></svg></b>
<i class="hsep"></i>
<i class="hhandle short"></i>
<b class="lt2"><svg viewBox="0 0 24 24"><use href="#vline"/><use href="#bp"/></svg></b>
<b class="lt2"><svg viewBox="0 0 24 24"><use href="#rast"/><use href="#bp"/></svg></b>
<b class="lt2"><svg viewBox="0 0 24 24"><use href="#mesh"/><use href="#bp"/></svg></b>
<b class="lt2"><svg viewBox="0 0 24 24"><use href="#comma"/><use href="#bp"/></svg></b>
<b class="lt2"><svg viewBox="0 0 24 24"><use href="#feather"/><use href="#bp"/></svg></b>
<b class="lt2"><svg viewBox="0 0 24 24"><use href="#vbox"/><use href="#bp"/></svg></b>
<b class="lt2"><svg viewBox="0 0 24 24"><use href="#pg"/><use href="#bp"/></svg><em class="drop sm"></em></b>
<b class="lt2"><svg viewBox="0 0 24 24"><use href="#webmap"/><use href="#bp"/></svg></b>
<b class="lt2"><svg viewBox="0 0 24 24"><use href="#wms"/><use href="#bp"/></svg></b>
<b class="lt2"><svg viewBox="0 0 24 24"><use href="#wfs"/><use href="#bp"/></svg></b>
<b class="lt2"><svg viewBox="0 0 24 24"><use href="#gpkg"/><use href="#bs"/></svg><em class="drop sm"></em></b>
</aside>

<section class="layers">
<div class="dock-head"><span>Layers</span><span class="dock-btns"><svg viewBox="0 0 24 24"><use href="#float"/></svg><svg viewBox="0 0 24 24"><use href="#closep"/></svg></span></div>
<div class="ltools">
<b class="lbtn on"><svg viewBox="0 0 24 24"><use href="#brushb"/></svg></b>
<b class="lbtn"><svg viewBox="0 0 24 24"><use href="#duplayer"/></svg></b>
<b class="lbtn"><svg viewBox="0 0 24 24"><use href="#eye"/></svg></b>
<b class="lbtn"><svg viewBox="0 0 24 24"><use href="#filter"/></svg></b>
<b class="lbtn"><svg viewBox="0 0 24 24"><use href="#eps"/></svg></b><em class="drop"></em>
<b class="lbtn"><svg viewBox="0 0 24 24"><use href="#expand"/></svg></b>
<b class="lbtn"><svg viewBox="0 0 24 24"><use href="#collapse"/></svg></b>
<b class="lbtn"><svg viewBox="0 0 24 24"><use href="#rmlayer"/></svg></b>
</div>
<div class="tree">
<div class="row"><span class="tw right"></span><span class="cb"></span><svg class="lico" viewBox="0 0 24 24"><use href="#points"/></svg><span class="lname off">Allis_Ababa_clinics</span></div>
<div class="row"><span class="tw down"></span><span class="cb"></span><svg class="lico" viewBox="0 0 24 24"><use href="#rastsm"/></svg><span class="lname off">HRSL_Addis_Ababa_Population</span></div>
<div class="row bandrow">Band 1 (Gray)</div>
<div class="legend"><span class="ramp"></span><span class="rlabels"><span>101.365419</span><span>3.63921</span></span></div>
<div class="row sel"><span class="tw"></span><span class="cb on"></span><span class="swatch"></span><span class="lname cur">ETH_Addis_Ababa</span></div>
</div>
<div class="tabs">
<span class="tab cur">Layers</span><span class="tab">Browser</span>
</div>
</section>

<div class="splitter"></div>

<section class="canvas">
<svg class="map" viewBox="424 138 960 910">
<polygon class="poly" points="468.3,567.3 518.7,558 533.3,530.7 528.3,499 506.7,474.7 509.7,448.7 537.3,451.7 558.3,449.3 557,426.7 559.7,396 575,374.3 577.3,355 612.7,318.7 613.3,265 619.3,242.3 669.3,218.3 689.3,214 721.7,194.7 756,201.3 792.7,197.3 834,185.7 861.7,167.3 880,160.3 901,160.3 923.3,175 966.7,227.3 994.3,224.7 1011.7,212.3 1038.3,220 1076,233.3 1133.3,224.3 1157.3,225.7 1180.7,208.7 1218.3,204 1245,215.3 1263.3,256.7 1266.7,286.7 1266.7,312.3 1301.7,360 1338.3,450 1342.3,490 1336.7,508.3 1342.3,556.7 1331.7,606.7 1311,631.7 1325.3,659.3 1311.9,688.3 1294.9,697 1220.4,680 1195.8,670.3 1178,684.3 1195.8,705 1233.8,730 1254.7,750 1236,793.3 1247.6,824 1229.3,860 1220.4,898.3 1204.7,866.7 1185.5,863.7 1151.1,875 1126.6,875.3 1103,866.3 1080.6,875 1082.9,896.7 1090,912.7 1082.9,930 1073.5,963.3 1073.9,1002 1051.6,1008.3 1036.4,1006.7 986.9,1027.3 969.5,1020.7 932.4,1020 924.4,1001.7 921.3,965 906.5,949.3 869.9,961.7 852.9,962.7 844.5,945 816.3,930 815,910 821.3,885 808.3,874.3 812.8,836.7 809.6,801.7 787.3,805 769.5,794 756,773.3 730.6,745.3 694.5,740.7 675.7,728.3 657.9,705 646,672.7 626.7,679.3 603.3,675 604,646.7 588.3,620.7 555,610 511.7,602.7 479.3,593.3"/>
</svg>
</section>

<div class="splitter narrow"></div>

<section class="styling">
<div class="dock-head"><span>Layer Styling</span><span class="dock-btns"><svg viewBox="0 0 24 24"><use href="#float"/></svg><svg viewBox="0 0 24 24"><use href="#closep"/></svg></span></div>
<div class="combo layercombo"><svg class="cico" viewBox="0 0 24 24"><use href="#polysm"/></svg><span>ETH_Addis_Ababa</span></div>
<div class="stybody">
<div class="stynav">
<svg class="brush" viewBox="0 0 24 24"><use href="#brushb"/></svg>
<div class="darkbar">
<svg viewBox="0 0 24 24"><use href="#labw"/></svg>
<svg viewBox="0 0 24 24"><use href="#labc"/></svg>
<svg viewBox="0 0 24 24"><use href="#cube"/></svg>
<svg viewBox="0 0 24 24"><use href="#tree"/></svg>
<svg viewBox="0 0 24 24"><use href="#history"/></svg>
</div>
</div>
<div class="stymain">
<div class="effhead"><b class="qbtn back"><svg viewBox="0 0 24 24"><use href="#backb"/></svg></b><span>Effects Properties</span></div>
<div class="efftop">
<div class="preview"><span class="dot"></span></div>
<div class="efflist">
<div class="effrows">
<div class="effrow"><span class="cb"></span>Inner Shadow</div>
<div class="effrow"><span class="cb on"></span>Blur</div>
<div class="effrow"><span class="cb"></span>Outer Glow</div>
<div class="effrow"><span class="cb"></span>Drop Shadow</div>
<div class="effrow"><span class="cb on"></span>Source</div>
<div class="effrow sel"><span class="cb on"></span>Drop Shadow</div>
</div>
<div class="vscroll"><span class="up"></span><span class="thumb"></span><span class="dn"></span></div>
</div>
<div class="effbtns">
<b class="qbtn"><svg viewBox="0 0 24 24"><use href="#plusg"/></svg></b>
<b class="qbtn"><svg viewBox="0 0 24 24"><use href="#upb"/></svg></b>
<b class="qbtn"><svg viewBox="0 0 24 24"><use href="#minusr"/></svg></b>
<b class="qbtn"><svg viewBox="0 0 24 24"><use href="#dng"/></svg></b>
</div>
</div>
<hr class="hr">
<div class="efftype"><span class="etl">Effect type</span><div class="combo grow">Drop Shadow</div></div>
<div class="form">
<div class="frow r1"><span class="lab">Offset</span><span class="dial"><span class="dialdot"></span></span><div class="spin grow">135<sup>°</sup><span class="sp"></span></div></div>
<div class="frow r2"><span class="lab"></span><div class="spin w186">2.0000<span class="sp"></span></div><div class="combo w184">Millimeters</div></div>
<div class="frow r3"><span class="lab">Blur radius</span><div class="spin w186">2.6450<span class="sp"></span></div><div class="combo w184">Millimeters</div></div>
<div class="frow r4"><span class="lab">Opacity</span><div class="slider"><span class="track"></span><span class="knob"></span></div><div class="spin w98">100.0 %<span class="sp"></span></div></div>
<div class="frow r5"><span class="lab colorlab">Color</span><div class="colorbtn"><span class="colorfill"></span></div><div class="colordrop"></div></div>
<div class="frow r6"><span class="lab">Blend mode</span><div class="combo grow">Normal</div></div>
<div class="frow r7"><span class="lab">Draw mode</span><div class="combo grow">Render and modify</div></div>
</div>
<div class="stybottom">
<b class="qbtn sq"><svg viewBox="0 0 24 24"><use href="#undoo"/></svg></b>
<b class="qbtn sq"><svg viewBox="0 0 24 24"><use href="#redog"/></svg></b>
<span class="live"><span class="cb on"></span>Live update</span>
<b class="apply"><span class="tick">✔</span>Apply</b>
</div>
</div>
</div>
<div class="tabs rtabs">
<span class="tab cur">Layer Styling</span><span class="tab">Processing Toolbox</span><span class="tab">Value Tool</span>
</div>
</section>
</main>

<footer class="status">
<div class="locator"><svg viewBox="0 0 24 24"><use href="#search"/></svg><span>Type to locate (Ctrl+K)</span></div>
<div class="stright">
<span class="st-coord">Coordinate</span>
<span class="stin w104">38.7861,9.0297</span>
<svg class="stic m5" viewBox="0 0 24 24"><use href="#crosshair"/></svg>
<span class="st-scale">Scale</span>
<span class="stin w96 combo-like">1:114854<i class="stdrop"></i></span>
<svg class="stic m11" viewBox="0 0 24 24"><use href="#lock"/></svg>
<span class="st-mag">Magnifier</span>
<span class="stin w99">100%<i class="stsp"></i></span>
<span class="st-rot">Rotation</span>
<span class="stin w94">0.0 °<i class="stsp"></i></span>
<span class="cb on st-cb"></span>
<span class="st-ren">Render</span>
<svg class="stic m18" viewBox="0 0 24 24"><use href="#globes"/></svg>
<span class="st-eps">EPSG:4326</span>
<svg class="stic m24" viewBox="0 0 24 24"><use href="#msg"/></svg>
</div>
</footer>
</div>
</body>
</html>
```
FILE: styles.css
```css
* { box-sizing: border-box; }
html, body { margin: 0; padding: 0; overflow: hidden; }
body { width: 1922px; height: 1082px; background: #eeeeee; color: #1c1c1c;
  font-family: "DejaVu Sans", sans-serif; font-size: 13px; }
.defs { display: block; height: 0; }
.svgt { font-family: "DejaVu Sans", sans-serif; }
.svgs { font-family: "DejaVu Serif", serif; }
.svgt.b { font-weight: 700; }
.svgt.i { font-style: italic; }
svg { display: block; overflow: visible; }
b, i, em { font-style: normal; font-weight: normal; }

.win { position: relative; width: 1922px; height: 1082px; display: flex; flex-direction: column; overflow: hidden; }
.win::after { content: ""; position: absolute; inset: 0; border: 1px solid #a0a0a0; border-top-color: #8a8a8a; pointer-events: none; }

.titlebar { height: 37px; background: #333333; color: #f0f0f0; display: grid; grid-template-columns: 1fr auto 1fr; align-items: center; flex: none; }
.wintitle { font-family: "Noto Sans", sans-serif; font-size: 12.700px; font-weight: 500; }
.winctl { display: flex; align-items: center; justify-content: flex-end; padding-right: 10px; }
.wmin { width: 9px; height: 2px; background: #eee; margin-right: 19px; margin-top: 5px; }
.wicon { width: 14px; height: 14px; margin-right: 21px; }
.wclose { width: 18px; height: 18px; border-radius: 50%; background: #e95420; color: #fff; display: flex; align-items: center; justify-content: center; font-size: 16px; font-weight: 700; line-height: 1; }

.menubar { height: 23px; background: #f3f3f3; border-bottom: 1px solid #d6d6d6; display: flex; align-items: center; gap: 14.400px; padding-left: 11px; flex: none; color: #222; font-size: 13.250px; }
.menubar u { text-decoration-thickness: 1px; text-underline-offset: 2px; }

.toolbar { height: 39px; display: flex; align-items: center; flex: none; border-bottom: 1px solid #b8b8b8; background: linear-gradient(#f7f7f7, #ececec); }
.handle { width: 16px; height: 24px; flex: none; background-image: radial-gradient(circle, #a6a6a6 .7px, transparent .9px); background-size: 3px 3px; background-position: center; background-clip: content-box; padding: 3px 6px; }
.handle.tight { width: 14px; padding: 3px 5px; }
.toolbar > .handle:first-child { width: 13.500px; padding: 3px 4.500px; }
.tb { width: 33px; height: 33px; flex: none; display: flex; align-items: center; justify-content: center; border: 1px solid transparent; border-radius: 3px; }
.tb svg { width: 25px; height: 25px; }
.tb.on { background: #dcdcdc; border-color: #b4b4b4; width: 32px; margin: 0 .5px; }
.tb.on svg { width: 24px; height: 26px; }
.tb.dis svg { opacity: .28; filter: grayscale(1); }
.tb.dis2 svg { opacity: .5; }
.drop { width: 12px; height: 12px; flex: none; display: flex; align-items: center; justify-content: center; }
.drop::before { content: ""; border-left: 4px solid transparent; border-right: 4px solid transparent; border-top: 4px solid #555; }
.drop.lite::before { border-top-color: #bbb; }
.vsep { width: 8px; height: 22px; flex: none; background: linear-gradient(#c8c8c8, #c8c8c8) center/1px 100% no-repeat; }

.main { flex: 1; min-height: 0; display: flex; background: #eeeeee; }

.lefttb { width: 52px; flex: none; border-right: 1px solid #b8b8b8; background: linear-gradient(90deg, #f7f7f7, #e3e3e3); display: flex; flex-direction: column; padding-left: 1px; }
.hhandle { height: 12px; flex: none; background-image: radial-gradient(circle, #a6a6a6 .7px, transparent .9px); background-size: 3px 3px; background-position: center; background-clip: content-box; padding: 4px 14px; }
.hhandle.short { height: 12px; padding: 6px 14px 2px; }
.lt { height: 32px; flex: none; display: flex; align-items: center; padding-left: 13px; }
.lt svg { width: 26px; height: 26px; }
.lt2 { height: 32.300px; flex: none; display: flex; align-items: center; padding-left: 8px; }
.lt2 svg { width: 25px; height: 25px; }
.lt2 .drop { margin-left: 3px; width: 8px; }
.drop.sm::before { border-left-width: 3.500px; border-right-width: 3.500px; }
.hsep { height: 8px; flex: none; margin: 0 10px; background: linear-gradient(#c8c8c8, #c8c8c8) center/100% 1px no-repeat; }

.layers { width: 366px; flex: none; display: flex; flex-direction: column; padding-left: 1px; }
.dock-head { height: 21px; flex: none; display: flex; align-items: center; justify-content: space-between; padding: 0 3px 2px 4px; }
.dock-btns { display: flex; gap: 3px; }
.dock-btns svg { width: 11.500px; height: 11.500px; }
.ltools { height: 28.500px; flex: none; display: flex; align-items: center; padding-left: 4px; padding-bottom: 3px; }
.lbtn { width: 24.500px; height: 24px; flex: none; display: flex; align-items: center; justify-content: center; border: 1px solid transparent; border-radius: 3px; }
.lbtn svg { width: 20px; height: 20px; }
.lbtn.on { background: #dcdcdc; border-color: #bbb; }
.ltools .drop { margin: 0; }
.tree { flex: 1; min-height: 0; background: #fff; border: 1px solid #b8b8b8; width: 365px; }
.row { height: 19px; display: flex; align-items: center; white-space: nowrap; }
.tw { width: 23px; flex: none; display: flex; justify-content: center; padding-right: 3px; }
.tw.right::before { content: ""; border-top: 4px solid transparent; border-bottom: 4px solid transparent; border-left: 5px solid #555; }
.tw.down::before { content: ""; border-left: 4px solid transparent; border-right: 4px solid transparent; border-top: 5px solid #555; }
.cb { width: 14px; height: 14px; flex: none; background: #fff; border: 1px solid #b0b0b0; border-radius: 1px; display: inline-flex; align-items: center; justify-content: center; font-size: 12px; line-height: 1; color: #111; }
.cb.on::before { content: "✔"; }
.lico { width: 13px; height: 13px; margin: 0 6px 0 9px; flex: none; }
.swatch { width: 13px; height: 15px; margin: 0 6px 0 9px; flex: none; background: #c4d3dd; border: 1px solid #9bb; }
.lname { font-weight: 700; }
.lname.off { font-style: italic; color: #808080; }
.lname.cur { text-decoration: underline; }
.bandrow { padding-left: 43px; height: 18px; }
.legend { height: 97px; display: flex; padding-left: 43px; }
.ramp { width: 16px; height: 96px; background: linear-gradient(#f8e621 0%, #c8e020 20%, #86d549 50%, #5ec962 76%, #2a9d8f 78%, #31688e 84%, #3e4a89 90%, #440154 100%); }
.rlabels { margin-left: 8px; display: flex; flex-direction: column; justify-content: space-between; height: 96px; padding-top: 1px; }
.row.sel { background: #308cc6; color: #fff; }
.tabs { height: 29px; flex: none; display: flex; align-items: flex-start; }
.tab { height: 24px; margin-top: 1px; padding: 0 12px; display: flex; align-items: center; background: #dcdcdc; border: 1px solid #b8b8b8; border-top: 0; border-radius: 0 0 3px 3px; white-space: nowrap; }
.tab.cur { height: 26px; background: linear-gradient(#eeeeee, #f9f9f9); margin-top: 0; padding-top: 2px; }

.splitter { width: 6px; flex: none; }
.splitter.narrow { width: 4px; }

.canvas { width: 962px; flex: none; background: #fff; border: 1px solid #b4b4b4; border-top: 0; height: 911px; overflow: hidden; }
.map { width: 960px; height: 910px; }
.poly { fill: #fdf4ea; stroke: #8f8a84; stroke-width: .8; filter: url(#dropshadow); }

.styling { width: 532px; flex: none; display: flex; flex-direction: column; border-left: 1px solid #c4c4c4; padding-left: 5px; }
.styling .dock-head { height: 22px; padding: 0 3px 4px 1px; }
.combo { height: 24px; border: 1px solid #b8b8b8; border-radius: 3px; background: linear-gradient(#fcfcfc, #ececec); display: flex; align-items: center; padding-left: 3px; position: relative; white-space: nowrap; }
.combo::after { content: ""; position: absolute; right: 6px; top: 9px; border-left: 4px solid transparent; border-right: 4px solid transparent; border-top: 4px solid #555; }
.layercombo { width: 521px; flex: none; height: 24.500px; }
.cico { width: 16px; height: 16px; margin: 0 1px 0 2px; }
.stybody { flex: 1; min-height: 0; display: flex; width: 521px; }
.stynav { width: 38px; flex: none; display: flex; flex-direction: column; }
.brush { width: 25px; height: 25px; margin: 9px 0 5px 6px; flex: none; }
.darkbar { flex: 1; background: #5f5f5f; display: flex; flex-direction: column; align-items: center; padding: 4px 6px 0 0; gap: 10.300px; }
.darkbar svg { width: 22px; height: 22px; }
.stymain { flex: 1; min-width: 0; margin-left: 3px; display: flex; flex-direction: column; }
.effhead { margin-top: 7px; height: 22px; display: flex; align-items: center; gap: 10px; flex: none; }
.qbtn { border: 1px solid #bdbdbd; border-radius: 3px; background: linear-gradient(#fcfcfc, #ececec); display: flex; align-items: center; justify-content: center; flex: none; }
.back { width: 24px; height: 22px; }
.back svg { width: 16px; height: 16px; }
.efftop { margin-top: 8px; display: flex; height: 123px; flex: none; }
.preview { width: 125px; flex: none; display: flex; justify-content: center; padding: 44px 10px 0 2px; }
.dot { width: 40px; height: 40px; border-radius: 50%; background: #ff5b5e; border: 1px solid #ff3b3e; box-shadow: 0 0 6px #ff6f72, 5px 5px 9px rgba(0,0,0,.9); }
.efflist { width: 288px; height: 118px; margin-top: 4.500px; border: 1px solid #b8b8b8; background: #fff; display: flex; flex: none; }
.effrows { flex: 1; min-width: 0; }
.effrow { height: 17px; display: flex; align-items: center; padding-left: 3px; gap: 6px; white-space: nowrap; }
.effrow.sel { background: #308cc6; color: #fff; }
.vscroll { width: 14px; flex: none; border-left: 1px solid #cfcfcf; background: #f6f6f6; display: flex; flex-direction: column; }
.vscroll .up { height: 14px; display: flex; justify-content: center; align-items: center; border-bottom: 1px solid #ddd; background: #fafafa; }
.vscroll .up::before { content: ""; border-left: 4px solid transparent; border-right: 4px solid transparent; border-bottom: 4px solid #555; }
.vscroll .thumb { height: 13px; background: #dfdfdf; }
.vscroll .dn { margin-top: auto; height: 14px; display: flex; justify-content: center; align-items: center; border-top: 1px solid #ddd; background: #fafafa; }
.vscroll .dn::before { content: ""; border-left: 4px solid transparent; border-right: 4px solid transparent; border-top: 4px solid #555; }
.effbtns { margin-left: 6px; display: grid; grid-template-columns: 27px 27px; column-gap: 7px; row-gap: 5px; grid-auto-rows: 23px; }
.effbtns svg { width: 17px; height: 17px; }
.hr { margin: 14px 0 0; border: 0; border-top: 1px solid #bcbcbc; height: 1px; flex: none; }
.efftype { margin-top: 9px; display: flex; align-items: center; height: 24px; flex: none; }
.etl { width: 72px; flex: none; padding-left: 1px; white-space: nowrap; }
.grow { flex: 1; min-width: 0; }
.form { padding: 0 10px; flex: none; }
.frow { display: flex; align-items: center; }
.lab { width: 84px; flex: none; white-space: nowrap; }
.colorlab { padding-left: 1px; }
.r1 { margin-top: 18px; height: 22px; }
.r2 { margin-top: 11px; height: 24px; }
.r3 { margin-top: 8px; height: 24px; }
.r2 .spin, .r3 .spin { align-self: flex-end; }
.r3 .lab { padding-top: 2px; }
.r4 { margin-top: 9px; height: 22px; }
.r5 { margin-top: 8px; height: 27px; }
.r6 { margin-top: 7px; height: 24px; }
.r7 { margin-top: 7.500px; height: 24px; }
.dial { width: 26px; height: 26px; border-radius: 50%; border: 1px solid #aaa; background: linear-gradient(135deg, #fafafa, #e2e2e2); box-shadow: 1px 1px 2px rgba(0,0,0,.3); margin: 0 8px 0 4px; flex: none; position: relative; }
.dialdot { position: absolute; right: 7px; bottom: 7px; width: 5px; height: 5px; border-radius: 50%; border: 1px solid #999; background: #ddd; }
.spin { height: 22px; background: #fff; border: 1px solid #b8b8b8; border-radius: 3px; display: flex; align-items: center; padding-left: 4px; position: relative; white-space: nowrap; }
.spin sup { font-size: 10px; line-height: 1; align-self: flex-start; margin-top: 1px; }
.sp { position: absolute; right: 0; top: 0; bottom: 0; width: 14px; border-left: 1px solid #cfcfcf; background: linear-gradient(#fafafa, #ececec); border-radius: 0 3px 3px 0; }
.sp::before { content: ""; position: absolute; left: 3px; top: 4px; border-left: 4px solid transparent; border-right: 4px solid transparent; border-bottom: 5px solid #666; }
.sp::after { content: ""; position: absolute; left: 3px; bottom: 4px; border-left: 4px solid transparent; border-right: 4px solid transparent; border-top: 5px solid #666; }
.w186 { width: 186px; flex: none; }
.w184 { width: 184.500px; flex: none; margin-left: 6px; }
.w98 { width: 98px; flex: none; margin-left: 6px; }
.slider { width: 272px; flex: none; position: relative; height: 22px; display: flex; align-items: center; }
.track { width: 262px; height: 5px; background: #308cc6; border: 1px solid #2a7cb0; border-radius: 3px; }
.knob { position: absolute; left: 260px; top: 5px; width: 12px; height: 12px; background: linear-gradient(#fff, #ececec); border: 1px solid #b0b0b0; border-radius: 3px; }
.colorbtn { width: 365px; height: 27px; flex: none; border: 1px solid #b8b8b8; border-radius: 3px 0 0 3px; background: #efefef; padding: 5px 4px; }
.colorfill { display: block; height: 16px; background: #000; border-radius: 2px; }
.colordrop { width: 11px; height: 27px; flex: none; margin-left: 1px; border: 1px solid #b8b8b8; border-radius: 0 3px 3px 0; background: #f5f5f5; position: relative; }
.colordrop::after { content: ""; position: absolute; left: 1px; top: 11px; border-left: 3.500px solid transparent; border-right: 3.500px solid transparent; border-top: 4px solid #555; }
.stybottom { margin-top: auto; height: 25px; display: flex; align-items: center; flex: none; gap: 8px; padding-left: 1px; }
.qbtn.sq { width: 22px; height: 22px; margin-top: -1px; }
.qbtn.sq svg { width: 18px; height: 18px; }
.live { margin-left: auto; display: flex; align-items: center; gap: 5px; }
.apply { width: 78px; height: 25px; margin-left: 6px; border: 1px solid #b8b8b8; border-radius: 3px; background: linear-gradient(#fcfcfc, #ececec); display: flex; align-items: center; justify-content: center; gap: 1px; }
.tick { color: #58a04a; font-size: 18px; line-height: 1; }

.rtabs { margin-top: 4px; margin-left: -3px; height: 26px; border-top: 1px solid #b8b8b8; flex: none; margin-bottom: 2px; }
.rtabs .tab { height: 23px; margin-top: 0; padding: 0 12.500px; }
.rtabs .tab.cur { height: 25px; padding: 2px 12px 0; }
.layers .tabs { height: 29px; border-top: 1px solid #b8b8b8; margin-top: 1px; }
.layers .tab { height: 23px; margin-top: 0; padding: 0 11px; }
.layers .tab.cur { height: 25px; padding: 2px 11.500px 0; }

.status { height: 32px; flex: none; display: flex; align-items: center; background: #eeeeee; font-size: 11px; padding-left: 5px; }
.locator { width: 269px; height: 23px; background: #fff; border: 1px solid #b8b8b8; border-radius: 3px; display: flex; align-items: center; color: #8a8a8a; font-size: 13px; padding-left: 7px; gap: 6px; flex: none; }
.locator svg { width: 16px; height: 16px; }
.stright { margin-left: auto; display: flex; align-items: center; padding-right: 7px; }
.stin { height: 21px; background: #fff; border: 1px solid #b8b8b8; border-radius: 3px; display: flex; align-items: center; padding-left: 4px; position: relative; flex: none; white-space: nowrap; }
.w104 { width: 104px; padding-left: 7px; margin-left: 4px; }
.w96 { width: 96px; height: 23px; margin-left: 4px; }
.w99 { width: 99px; margin-left: 4px; }
.w94 { width: 94px; margin-left: 10px; }
.stdrop { position: absolute; right: 0; top: 0; bottom: 0; width: 20px; border-left: 1px solid #cfcfcf; }
.stdrop::after { content: ""; position: absolute; left: 6px; top: 9px; border-left: 4px solid transparent; border-right: 4px solid transparent; border-top: 4px solid #555; }
.stsp { position: absolute; right: 0; top: 0; bottom: 0; width: 14px; border-left: 1px solid #cfcfcf; }
.stsp::before { content: ""; position: absolute; left: 3px; top: 3px; border-left: 3.500px solid transparent; border-right: 3.500px solid transparent; border-bottom: 5px solid #666; }
.stsp::after { content: ""; position: absolute; left: 3px; bottom: 3px; border-left: 3.500px solid transparent; border-right: 3.500px solid transparent; border-top: 5px solid #666; }
.stic { width: 15px; height: 15px; flex: none; }
.m5 { margin-left: 5px; }
.m11 { margin-left: 11px; }
.m18 { margin-left: 18px; }
.m24 { margin-left: 24px; }
.st-coord, .st-scale, .st-mag, .st-rot, .st-ren, .st-eps { white-space: nowrap; flex: none; }
.st-scale { margin-left: 13px; }
.st-mag { margin-left: 6.500px; }
.st-rot { margin-left: 8px; }
.st-cb { margin-left: 7px; }
.st-ren { margin-left: 4px; }
.st-eps { margin-left: 3px; }
```
